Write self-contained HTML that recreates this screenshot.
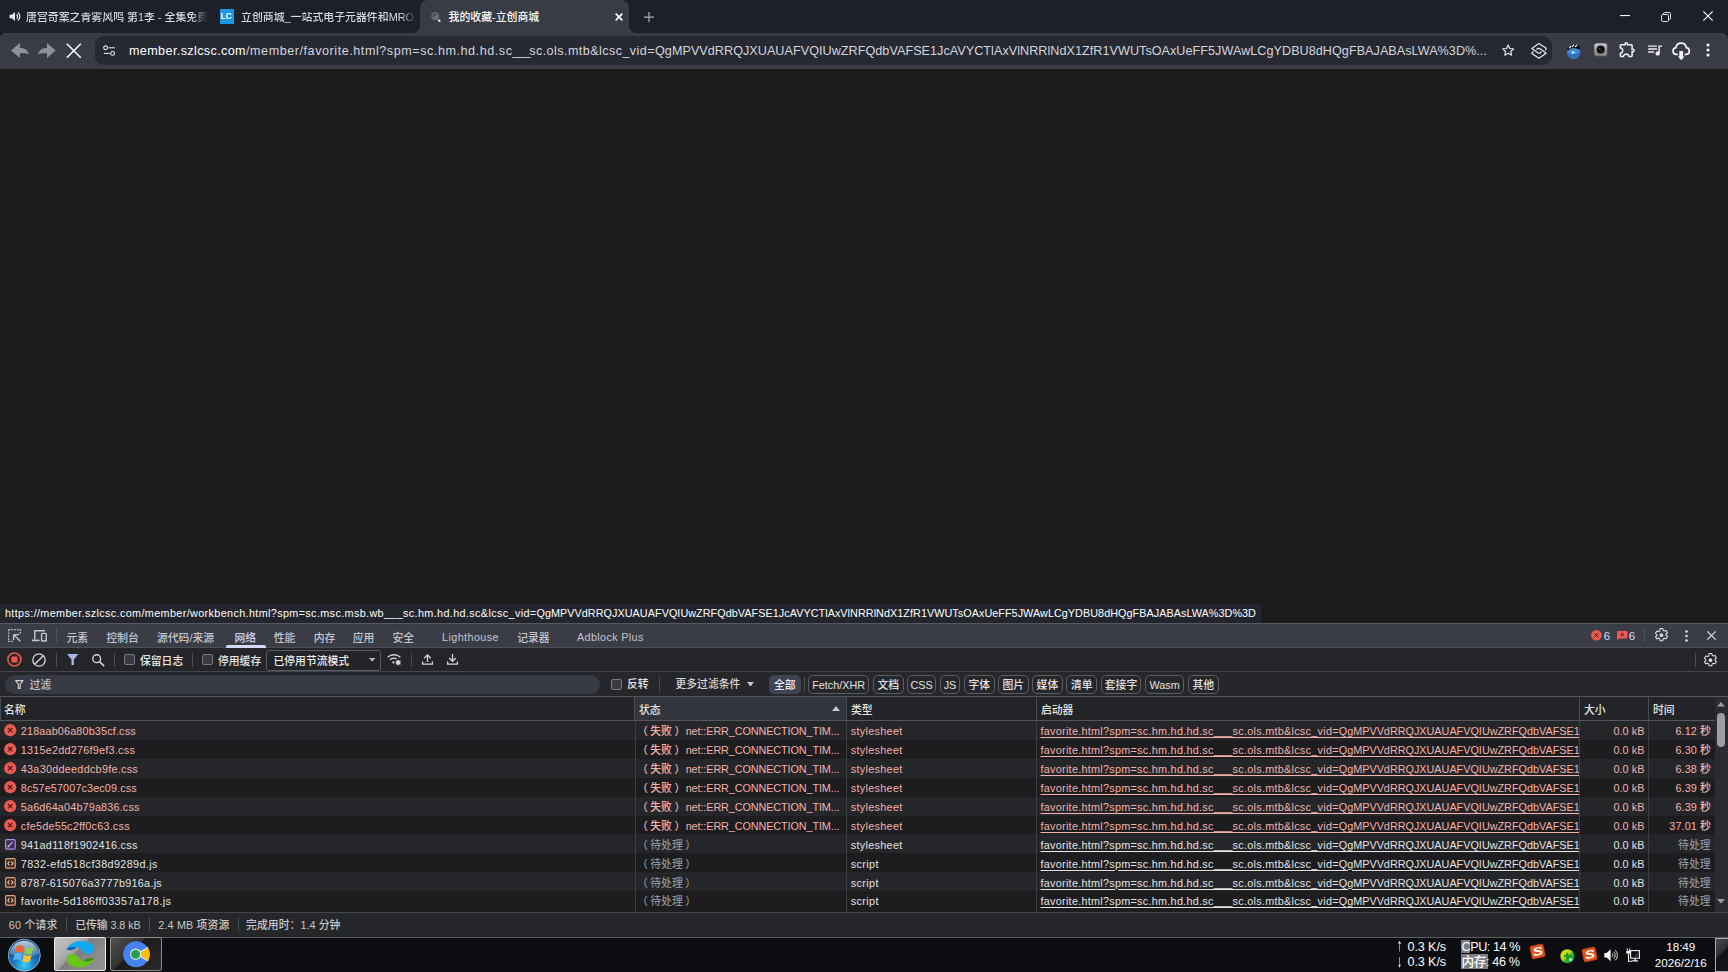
<!DOCTYPE html>
<html lang="zh-CN">
<head>
<meta charset="utf-8">
<title>我的收藏-立创商城</title>
<style>
*{box-sizing:border-box}
html,body{margin:0;padding:0;overflow:hidden;background:#1b1b1b}
body{width:1728px;height:972px;position:relative;overflow:hidden;background:#1b1b1b;font-weight:500;font-family:'Liberation Sans','Noto Sans CJK SC',sans-serif;color:#e3e3e3}
.a{position:absolute}
.t{position:absolute;white-space:nowrap;line-height:1}
svg{position:absolute;overflow:visible}
#tabstrip{left:0;top:0;width:1728px;height:33px;background:#1e2029}
#toolbar{left:0;top:33px;width:1728px;height:36px;background:#393b45;border-radius:5px 6px 0 0}
#omni{left:95px;top:36px;width:1457px;height:29px;background:#262832;border-radius:9px}
#acttab{left:420px;top:0;width:209px;height:34px;background:#393b45;border-radius:8px 8px 0 0}
.tabtxt{font-size:10.9px;top:12.4px;color:#d6d8de;font-weight:500}
#bubble{left:0;top:604px;width:1262px;height:19px;background:#23252d;border-radius:0 3px 0 0}
#dt{left:0;top:623px;width:1728px;height:314px;background:#26272c}
#dttabs{left:0;top:623px;width:1728px;height:25px;background:#3a3c46;border-top:1px solid #565862;border-bottom:1px solid #4c4e58}
.dtt{font-size:10.8px;top:632.5px;color:#c4c6ce}
#dttool{left:0;top:648px;width:1728px;height:24px;background:#242529;border-bottom:1px solid #44464e}
#dtfilter{left:0;top:672px;width:1728px;height:25px;background:#26272b;border-bottom:1px solid #54565c}
.vd{position:absolute;width:1px;background:#4a4c54}
.cb{position:absolute;width:11px;height:11px;border:1px solid #777981;border-radius:2px;background:#3a3b40}
.chip{position:absolute;top:675px;height:19px;border:1px solid #5c5e66;border-radius:5px;font-size:10.8px;color:#e3e3e3;text-align:center;line-height:19.6px;white-space:nowrap}
#thead{left:0;top:697px;width:1715px;height:24px;background:#232427;border-bottom:1px solid #54565c}
.th{position:absolute;top:0;height:23px;font-size:10.8px;line-height:23px;padding-top:1.6px;color:#e3e3e3;white-space:nowrap;padding-left:4px}
.row{position:absolute;left:0;width:1715px;height:19px;font-size:10.8px;line-height:19px;white-space:nowrap}
.row.o{background:#252629}
.row.e{background:#1d1d20}
.c{position:absolute;top:0;height:100%;overflow:hidden;white-space:nowrap;padding-top:1.4px}
.pl{margin-left:-2.6px;margin-right:2.6px}
.pr{margin-left:2.6px;margin-right:-2.6px}
.err{color:#f4b2ac}
.pend{color:#8e9096}
.ok{color:#e3e3e3}
.lnk{text-decoration:underline;text-underline-offset:1.5px;text-decoration-thickness:1px}
#dtstatus{left:0;top:912px;width:1728px;height:25px;background:#25262a;border-top:1px solid #44464e}
.st{font-size:10.8px;top:919.5px;color:#c7c7c7}
#taskbar{left:0;top:937px;width:1728px;height:35px;background:#0b0d11;border-top:1px solid #5a5d63}
.tk{font-size:12.6px;color:#fff}
</style>
</head>
<body>
<div class="a" id="tabstrip"></div>
<div class="a" id="toolbar"></div>
<div class="a" id="acttab"></div>
<svg style="left:413px;top:26px" width="7" height="7" viewBox="0 0 7 7" ><path d="M7 0 V7 H0 A7 7 0 0 0 7 0Z" fill="#393b45"/></svg>
<svg style="left:629px;top:26px" width="7" height="7" viewBox="0 0 7 7" ><path d="M0 0 V7 H7 A7 7 0 0 1 0 0Z" fill="#393b45"/></svg>
<svg style="left:9px;top:10.5px" width="12" height="11" viewBox="0 0 12 11" ><path d="M0.5 3.8h2.3L6 1v9L2.8 7.2H0.5z" fill="#e8e8ec"/><path d="M7.6 3.4a2.8 2.8 0 0 1 0 4.2M8.8 1.4a5.2 5.2 0 0 1 0 8.2" stroke="#e8e8ec" stroke-width="1.3" fill="none"/></svg>
<div class="t tabtxt" style="left:26px;width:183px;overflow:hidden;-webkit-mask-image:linear-gradient(90deg,#000 165px,transparent 182px);mask-image:linear-gradient(90deg,#000 165px,transparent 182px)">唐宫奇案之青雾风鸣 第1季 - 全集免费观看</div>
<div class="a" style="left:219.5px;top:9px;width:14.5px;height:14.5px;background:#1a96e8"></div>
<div class="t" style="left:220.5px;top:12px;font-size:8.5px;font-weight:bold;color:#fff;letter-spacing:-0.3px">LC</div>
<div class="t tabtxt" style="left:241px;width:177px;overflow:hidden;-webkit-mask-image:linear-gradient(90deg,#000 160px,transparent 176px);mask-image:linear-gradient(90deg,#000 160px,transparent 176px)">立创商城_一站式电子元器件和MRO工业品</div>
<svg style="left:430.5px;top:12px" width="10" height="10" viewBox="0 0 10 10" ><circle cx="4.2" cy="4.2" r="3.9" fill="#6b6d78"/><path d="M2.2 4.6a2.1 2.1 0 0 1 3.6-1.6" stroke="#3f414b" stroke-width="1.3" fill="none"/><path d="M1.6 5.2l2.2-.2-1.2-1.6z" fill="#3f414b"/><rect x="7.2" y="7.6" width="2.2" height="2.2" rx="0.5" fill="#fff"/></svg>
<div class="t tabtxt" style="left:448.5px;color:#fff;font-weight:500">我的收藏-立创商城</div>
<svg style="left:614.5px;top:12.5px" width="8" height="8" viewBox="0 0 8 8" ><path d="M0.7 0.7L7.3 7.3M7.3 0.7L0.7 7.3" stroke="#fff" stroke-width="1.7"/></svg>
<svg style="left:643.5px;top:11.5px" width="10" height="10" viewBox="0 0 10 10" ><path d="M5 0V10M0 5H10" stroke="#a9acb7" stroke-width="1.25"/></svg>
<svg style="left:1619.5px;top:14.8px" width="10" height="1.2" viewBox="0 0 10 1.2" ><rect width="10" height="1.1" fill="#fff"/></svg>
<svg style="left:1661px;top:11.5px" width="10" height="10" viewBox="0 0 10 10" ><rect x="0.5" y="2.5" width="7" height="7" rx="1.2" fill="none" stroke="#e6e6ea" stroke-width="1"/><path d="M2.5 2.3V1.6A1.1 1.1 0 0 1 3.6 0.5H8.4A1.1 1.1 0 0 1 9.5 1.6V6.4A1.1 1.1 0 0 1 8.4 7.5H7.7" fill="none" stroke="#e6e6ea" stroke-width="1"/></svg>
<svg style="left:1702.5px;top:11.2px" width="10" height="10" viewBox="0 0 10 10" ><path d="M0.3 0.3L9.7 9.7M9.7 0.3L0.3 9.7" stroke="#fff" stroke-width="1.1"/></svg>
<svg style="left:11px;top:43px" width="19" height="16" viewBox="0 0 19 16" ><path d="M0 7.500L8.900 0V5C13 5 16.500 6.500 18 11.200C16 10.300 14 10.200 8.900 10.200V15.100Z" fill="#8e909a"/></svg>
<svg style="left:38px;top:43px" width="19" height="16" viewBox="0 0 19 16" ><path d="M17.600 7.500L9 0V5C5 5 1.500 6.500 0 11.200C2 10.300 4 10.200 9 10.200V15.100Z" fill="#8e909a"/></svg>
<svg style="left:66.3px;top:43px" width="16" height="16" viewBox="0 0 16 16" ><path d="M0.8 0.8L14.8 14.8M14.8 0.8L0.8 14.8" stroke="#fff" stroke-width="1.5"/></svg>
<div class="a" id="omni"></div>
<svg style="left:102.5px;top:45px" width="13" height="12" viewBox="0 0 13 12" ><circle cx="2.6" cy="2.8" r="1.9" fill="none" stroke="#e8e8ec" stroke-width="1.1"/><path d="M5.6 2.8H11.8" stroke="#e8e8ec" stroke-width="1.1"/><circle cx="9.6" cy="8.4" r="1.9" fill="none" stroke="#e8e8ec" stroke-width="1.1"/><path d="M1 8.4H6.6" stroke="#e8e8ec" stroke-width="1.1"/></svg>
<div class="t" id="url" style="left:129px;top:45.2px;font-size:12.6px;color:#d4d6dc"><span style="letter-spacing:0.378px;color:#fff">member.szlcsc.com</span><span style="letter-spacing:0.547px;">/member/favorite.html?spm=sc.hm.hd.hd.sc</span><span style="letter-spacing:-1.439px;">___</span><span style="letter-spacing:0.428px;">sc.ols.mtb&amp;lcsc_vid=</span><span style="letter-spacing:0.05px;">QgMPVVdRRQJXUAUAFVQIUwZRFQdbVAFSE1JcAVYCTlAxVlNRRlNdX1ZfR1VWUTsOAxUeFF5JWAwLCgYDBU8dHQgFBAJABAsLWA%3D%...</span></div>
<svg style="left:1502.2px;top:44.2px" width="12.4" height="12" viewBox="0 0 12.4 12" ><path d="M6.2 1L7.8 4.5L11.6 4.9L8.8 7.5L9.55 11.2L6.2 9.3L2.85 11.2L3.6 7.5L0.8 4.9L4.600 4.500Z" fill="none" stroke="#e8e8ec" stroke-width="1.2" stroke-linejoin="round"/></svg>
<svg style="left:1531px;top:42.5px" width="16" height="16" viewBox="0 0 16 16" ><path d="M14.6 6.9L15.2 5.3L7.97 0.55L0.84 5.5L6.9 9.7Q8.8 10.9 10.2 8.900" fill="none" stroke="#e8e8ec" stroke-width="1.25" stroke-linejoin="round" stroke-linecap="round"/><path d="M5.800 6.150Q7.500 4.800 9.500 6.100L15.100 10.250L7.970 15.220L0.840 10.470L2.200 8.700" fill="none" stroke="#e8e8ec" stroke-width="1.250" stroke-linejoin="round" stroke-linecap="round"/></svg>
<svg style="left:1565.5px;top:43px" width="15.5" height="16" viewBox="0 0 15.5 16" ><circle cx="7.700" cy="9.300" r="6.500" fill="#3f8ad8"/><path d="M1.200 9.300A6.500 6.500 0 0 0 14.200 9.300A9 7 0 0 1 1.200 9.300z" fill="#2d72c2"/><path d="M1.700 5.200Q7 0 13.600 4.400L12.900 5.900Q7 2.300 2.400 6.600z" fill="#101216" stroke="#101216" stroke-width="1.400" stroke-linejoin="round"/><path d="M3.200 5.300L4.900 2.900M6.200 4L7.900 1.700M9.200 4L10.900 1.800" stroke="#fff" stroke-width="1.200"/><path d="M5.800 7.600L9.600 9.400L5.800 11.200z" fill="#b8ecff"/></svg>
<svg style="left:1593.6px;top:43.3px" width="13.4" height="13.4" viewBox="0 0 13.4 13.4" ><defs><linearGradient id="cg" x1="0" y1="0" x2="0" y2="1"><stop offset="0" stop-color="#c9c9c9"/><stop offset="0.5" stop-color="#9c9c9c"/><stop offset="1" stop-color="#7a7a7a"/></linearGradient></defs><rect x="0.200" y="0.200" width="13" height="13" rx="2.600" fill="url(#cg)"/><circle cx="6.700" cy="6.600" r="4" fill="#0c0c0c"/><circle cx="5.700" cy="5.600" r="0.800" fill="#6a6a6a"/><circle cx="7.600" cy="7.700" r="0.700" fill="#555"/></svg>
<svg style="left:1618.3px;top:40.1px" width="18.8" height="18.8" viewBox="0 0 24 24" ><path d="M10.500 4.500c.280 0 .500.220.500.500v2h6v6h2c.280 0 .500.220.500.500s-.220.500-.500.500h-2v6h-2.120c-.680-1.750-2.390-3-4.380-3s-3.700 1.250-4.380 3H4v-2.120c1.750-.680 3-2.390 3-4.380 0-1.990-1.240-3.700-2.990-4.380L4 7h6V5c0-.280.220-.500.500-.500m0-2C9.120 2.500 8 3.620 8 5H4c-1.100 0-1.990.900-1.990 2v3.800h.290c1.490 0 2.700 1.210 2.700 2.700s-1.210 2.700-2.700 2.700H2V20c0 1.100.900 2 2 2h3.800v-.300c0-1.490 1.210-2.700 2.700-2.700s2.700 1.210 2.700 2.700v.300H17c1.100 0 2-.900 2-2v-4c1.380 0 2.500-1.120 2.500-2.500S20.380 11 19 11V7c0-1.100-.900-2-2-2h-4c0-1.380-1.120-2.500-2.500-2.500z" fill="#eeeef2"/></svg>
<svg style="left:1645.5px;top:40.6px" width="17.5" height="17.5" viewBox="0 0 24 24" ><path d="M15 6H3v2h12V6zm0 4H3v2h12v-2zM3 16h8v-2H3v2zM17 6v8.180c-.310-.110-.650-.180-1-.180-1.660 0-3 1.340-3 3s1.340 3 3 3 3-1.340 3-3V8h3V6h-5z" fill="#eeeef2"/></svg>
<svg style="left:1672px;top:40.5px" width="18.5" height="19.5" viewBox="0 0 18.5 19.5" ><path d="M5.300 13.400H4.300A3.400 3.400 0 0 1 3.900 6.650A5.300 5.300 0 0 1 14.400 6.650A3.400 3.400 0 0 1 14.200 13.400H13.200" fill="none" stroke="#f4f4f6" stroke-width="1.700" stroke-linecap="round"/><path d="M7.300 9.900H11.100V15.400H12.500L9.200 19.200L5.900 15.400H7.300z" fill="#f4f4f6"/></svg>
<svg style="left:1706.1px;top:43.4px" width="4" height="14" viewBox="0 0 4 14" ><circle cx="2" cy="2" r="1.550" fill="#f4f4f6"/><circle cx="2" cy="7" r="1.550" fill="#f4f4f6"/><circle cx="2" cy="12" r="1.550" fill="#f4f4f6"/></svg>
<div class="a" id="bubble"></div>
<div class="t" id="sturl" style="left:5px;top:607.7px;font-size:10.8px;color:#fff"><span style="letter-spacing:0.37px;">https://member.szlcsc.com/member/workbench.html?spm=sc.msc.msb.wb___sc.hm.hd.hd.sc&amp;lcsc_vid=</span><span style="letter-spacing:0.057px;">QgMPVVdRRQJXUAUAFVQIUwZRFQdbVAFSE1JcAVYCTlAxVlNRRlNdX1ZfR1VWUTsOAxUeFF5JWAwLCgYDBU8dHQgFBAJABAsLWA%3D%3D</span></div>
<div class="a" id="dt"></div>
<div class="a" id="dttabs"></div>
<svg style="left:8px;top:629px" width="13" height="13" viewBox="0 0 13 13" ><path d="M0.7 0.7H12.3V5.2M0.7 0.7V12.3H5.2" fill="none" stroke="#c4c6ce" stroke-width="1.3" stroke-dasharray="1.6 1.2"/><path d="M5.6 5.6H11M5.6 5.6V11M5.8 5.8L12.3 12.3" stroke="#c4c6ce" stroke-width="1.4" fill="none"/></svg>
<svg style="left:32px;top:629.5px" width="15" height="12" viewBox="0 0 15 12" ><path d="M2.8 9.6V0.8H13" fill="none" stroke="#c4c6ce" stroke-width="1.4"/><path d="M0 10.4H7.6" stroke="#c4c6ce" stroke-width="1.6"/><rect x="9.6" y="3.4" width="4.6" height="7.6" rx="0.6" fill="none" stroke="#c4c6ce" stroke-width="1.4"/></svg>
<div class="vd" style="left:56px;top:628px;height:15px;background:#50525c"></div>
<div class="t dtt" style="left:66.5px;color:#c4c6ce">元素</div>
<div class="t dtt" style="left:106.5px;color:#c4c6ce">控制台</div>
<div class="t dtt" style="left:157.0px;color:#c4c6ce">源代码/来源</div>
<div class="t dtt" style="left:234.5px;color:#c9d2f5">网络</div>
<div class="t dtt" style="left:273.8px;color:#c4c6ce">性能</div>
<div class="t dtt" style="left:313.7px;color:#c4c6ce">内存</div>
<div class="t dtt" style="left:352.8px;color:#c4c6ce">应用</div>
<div class="t dtt" style="left:392.5px;color:#c4c6ce">安全</div>
<div class="t" style="left:442px;top:632px;font-size:10.8px;letter-spacing:0.416px;color:#c4c6ce;">Lighthouse</div>
<div class="t dtt" style="left:517.2px;color:#c4c6ce">记录器</div>
<div class="t" style="left:577px;top:632px;font-size:10.8px;letter-spacing:0.361px;color:#c4c6ce;">Adblock Plus</div>
<div class="a" style="left:226px;top:645px;width:40px;height:3px;background:#d3dbfb;border-radius:2px 2px 0 0"></div>
<svg style="left:1591px;top:630px" width="11" height="11" viewBox="0 0 11 11" ><circle cx="5.4" cy="5.3" r="5.3" fill="#ea5a50"/><path d="M3.4 3.3L7.4 7.3M7.4 3.3L3.4 7.3" stroke="#3a1512" stroke-width="1"/></svg>
<div class="t" style="left:1603.8px;top:630.8px;font-size:11.5px;color:#d8dcf0">6</div>
<svg style="left:1617px;top:631px" width="11" height="10" viewBox="0 0 11 10" ><path d="M0.8 0H9.6A0.8 0.8 0 0 1 10.4 0.8V6.6A0.8 0.8 0 0 1 9.6 7.4H2.6L0 9.4V0.8A0.8 0.8 0 0 1 0.8 0z" fill="#ea5a50"/><path d="M3.8 2.2L6.6 5M6.6 2.2L3.8 5" stroke="#3a1512" stroke-width="1"/></svg>
<div class="t" style="left:1628.8px;top:630.8px;font-size:11.5px;color:#d8dcf0">6</div>
<div class="vd" style="left:1644px;top:628px;height:14px;background:#50525c"></div>
<svg style="left:1654.6px;top:628.2px" width="14" height="15.6" viewBox="0 0 14 15.6" ><g transform="scale(0.92)"><path d="M5.5 0.6h3l.4 2 1.2.7 1.9-.7 1.5 2.6-1.5 1.3v1.4l1.5 1.3-1.5 2.6-1.9-.7-1.2.7-.4 2h-3l-.4-2-1.2-.7-1.9.7L.5 9.800 2 8.500V7.100L.5 5.800 2 3.200l1.900.7 1.200-.7z" fill="none" stroke="#e3e3e6" stroke-width="1.15" stroke-linejoin="round"/><circle cx="7" cy="7.8" r="2" fill="#d8d8dc"/></g></svg>
<svg style="left:1685px;top:629.5px" width="3" height="12" viewBox="0 0 3 12" ><circle cx="1.5" cy="1.4" r="1.25" fill="#e3e3e6"/><circle cx="1.5" cy="6" r="1.25" fill="#e3e3e6"/><circle cx="1.5" cy="10.6" r="1.25" fill="#e3e3e6"/></svg>
<svg style="left:1706.5px;top:631.2px" width="9" height="9" viewBox="0 0 9 9" ><path d="M0.3 0.3L8.7 8.7M8.7 0.3L0.3 8.7" stroke="#e3e3e6" stroke-width="1.2"/></svg>
<div class="a" id="dttool"></div>
<svg style="left:6.7px;top:651.7px" width="15" height="15" viewBox="0 0 15 15" ><circle cx="7.4" cy="7.5" r="6.5" fill="none" stroke="#ea5a50" stroke-width="1.6"/><rect x="4.4" y="4.5" width="6" height="6" rx="0.8" fill="#f0574c"/></svg>
<svg style="left:32.3px;top:652.5px" width="14" height="14" viewBox="0 0 14 14" ><circle cx="7" cy="7" r="6.2" fill="none" stroke="#d8d8dc" stroke-width="1.3"/><path d="M2.7 11.3L11.3 2.7" stroke="#d8d8dc" stroke-width="1.3"/></svg>
<div class="vd" style="left:56px;top:653px;height:14px"></div>
<svg style="left:67px;top:654px" width="11.5" height="11" viewBox="0 0 11.5 11" ><path d="M0 0H11.4L6.9 5.6V11H4.5V5.6z" fill="#a9b4e4"/></svg>
<svg style="left:91.5px;top:653.5px" width="13" height="13" viewBox="0 0 13 13" ><circle cx="4.7" cy="4.7" r="3.9" fill="none" stroke="#d8d8dc" stroke-width="1.4"/><path d="M7.6 7.6L12.2 12.2" stroke="#d8d8dc" stroke-width="1.6"/></svg>
<div class="vd" style="left:114px;top:653px;height:14px"></div>
<div class="cb" style="left:124px;top:654px"></div>
<div class="t" style="left:140px;top:655.5px;font-size:10.8px;color:#e8e8e8">保留日志</div>
<div class="vd" style="left:192px;top:653px;height:14px"></div>
<div class="cb" style="left:201.5px;top:654px"></div>
<div class="t" style="left:218px;top:655.5px;font-size:10.8px;color:#e8e8e8">停用缓存</div>
<div class="a" style="left:266px;top:649.5px;width:115px;height:21px;border:1px solid #5a5c64;border-radius:3px;background:#232428"></div>
<div class="t" style="left:273.5px;top:655.5px;font-size:10.8px;color:#f0f0f0">已停用节流模式</div>
<svg style="left:368.5px;top:657.7px" width="6.4" height="3.8" viewBox="0 0 6.4 3.8" ><path d="M0 0H6.4L3.2 3.8z" fill="#b8bac0"/></svg>
<svg style="left:387px;top:654px" width="15" height="11.5" viewBox="0 0 15 11.5" ><path d="M0.6 3.4A9 9 0 0 1 13.4 3.4M2.9 5.8A5.8 5.8 0 0 1 9.6 4.9" fill="none" stroke="#d8d8dc" stroke-width="1.3"/><circle cx="6.4" cy="8.4" r="1.1" fill="#d8d8dc"/><circle cx="11.2" cy="8.6" r="1.5" fill="none" stroke="#d8d8dc" stroke-width="1.6"/><path d="M11.2 5.8V11.4M8.8 7.2L13.6 10M13.6 7.2L8.8 10" stroke="#d8d8dc" stroke-width="1"/></svg>
<div class="vd" style="left:410.5px;top:653px;height:14px"></div>
<svg style="left:422px;top:654px" width="11" height="11" viewBox="0 0 11 11" ><path d="M5.5 8V1M2.2 4.2L5.5 0.9L8.8 4.2" fill="none" stroke="#d8d8dc" stroke-width="1.3"/><path d="M0.6 7.6V10.2H10.4V7.6" fill="none" stroke="#d8d8dc" stroke-width="1.3"/></svg>
<svg style="left:447px;top:654px" width="11" height="11" viewBox="0 0 11 11" ><path d="M5.5 0V7.2M2.2 4L5.5 7.3L8.8 4" fill="none" stroke="#d8d8dc" stroke-width="1.3"/><path d="M0.6 7.6V10.2H10.4V7.6" fill="none" stroke="#d8d8dc" stroke-width="1.3"/></svg>
<div class="vd" style="left:1695px;top:653px;height:14px"></div>
<svg style="left:1704.1px;top:652.8px" width="14" height="15.6" viewBox="0 0 14 15.6" ><g transform="scale(0.92)"><path d="M5.5 0.6h3l.4 2 1.2.7 1.9-.7 1.5 2.6-1.5 1.3v1.4l1.5 1.3-1.5 2.6-1.9-.7-1.2.7-.4 2h-3l-.4-2-1.2-.7-1.9.7L.5 9.800 2 8.500V7.100L.5 5.800 2 3.200l1.900.7 1.200-.7z" fill="none" stroke="#e3e3e6" stroke-width="1.15" stroke-linejoin="round"/><circle cx="7" cy="7.8" r="2" fill="#d8d8dc"/></g></svg>
<div class="a" id="dtfilter"></div>
<div class="a" style="left:4.5px;top:675px;width:595px;height:18.5px;border-radius:9.5px;background:#383a43"></div>
<svg style="left:14.5px;top:679.8px" width="9" height="9" viewBox="0 0 9 9" ><path d="M0.6 0.6H8L5.2 4.2V8.4H3.4V4.2z" fill="none" stroke="#d0d2d8" stroke-width="1.1" stroke-linejoin="round"/></svg>
<div class="t" style="left:29.5px;top:680.2px;font-size:10.8px;color:#c4c6cc">过滤</div>
<div class="cb" style="left:611px;top:678.5px"></div>
<div class="t" style="left:627px;top:679.3px;font-size:10.8px;color:#e3e3e3">反转</div>
<div class="vd" style="left:659px;top:677px;height:15px"></div>
<div class="t" style="left:675.5px;top:679.3px;font-size:10.8px;color:#d6d6da">更多过滤条件</div>
<svg style="left:747.3px;top:681.6px" width="7" height="4.6" viewBox="0 0 7 4.6" ><path d="M0 0H7L3.5 4.6z" fill="#c8c8cc"/></svg>
<div class="chip" style="left:769px;width:31.5px;background:#3f4452;border-color:#3f4452;color:#e8ecff">全部</div>
<div class="vd" style="left:804px;top:677px;height:15px"></div>
<div class="chip" style="left:808px;width:61.3px">Fetch/XHR</div>
<div class="chip" style="left:872.8px;width:30.8px">文档</div>
<div class="chip" style="left:907px;width:29px">CSS</div>
<div class="chip" style="left:940px;width:20px">JS</div>
<div class="chip" style="left:964px;width:30.5px">字体</div>
<div class="chip" style="left:998px;width:30.6px">图片</div>
<div class="chip" style="left:1032px;width:30.8px">媒体</div>
<div class="chip" style="left:1066.4px;width:30.6px">清单</div>
<div class="chip" style="left:1101px;width:40px">套接字</div>
<div class="chip" style="left:1145px;width:39.3px">Wasm</div>
<div class="chip" style="left:1188px;width:30.6px">其他</div>
<div class="a" id="thead">
<div class="th" style="left:0px;width:634px;">名称</div>
<div class="th" style="left:634px;width:212px;background:#33353c;border-left:1px solid #4a4c54;">状态</div>
<div class="th" style="left:846px;width:190px;border-left:1px solid #4a4c54;">类型</div>
<div class="th" style="left:1036px;width:543px;border-left:1px solid #4a4c54;">启动器</div>
<div class="th" style="left:1579px;width:69px;border-left:1px solid #4a4c54;">大小</div>
<div class="th" style="left:1648px;width:67px;border-left:1px solid #4a4c54;">时间</div>
<svg style="left:831.5px;top:8.5px" width="8" height="5" viewBox="0 0 8 5" ><path d="M0 5H8L4 0z" fill="#c8c8cc"/></svg>
</div>
<div class="a" style="left:0;top:696px;width:1px;height:216px;background:#4a4c54"></div>
<div class="row o err" style="top:721.0px;height:19px">
<svg style="left:4.4px;top:3.4px" width="12.4" height="12.4" viewBox="0 0 12.4 12.4" ><circle cx="6.2" cy="6.2" r="6.1" fill="#ea5a50"/><path d="M4 4L8.4 8.4M8.4 4L4 8.4" stroke="#4a1a16" stroke-width="1.1"/></svg>
<div class="c" style="left:20.8px;width:612px"><span style="letter-spacing:0.166px;">218aab06a80b35cf.css</span></div>
<div class="c" style="left:635px;width:210px;border-left:1px solid #3c3e46;padding-left:3.5px"><span class="pl">（</span>失败<span class="pr">）</span> <span style="letter-spacing:-0.084px;">net::ERR_CONNECTION_TIM...</span></div>
<div class="c" style="left:846px;width:190px;border-left:1px solid #3c3e46;padding-left:3.8px"><span style="letter-spacing:0.312px;">stylesheet</span></div>
<div class="c" style="left:1036px;width:543.5px;border-left:1px solid #3c3e46;padding-left:3.5px"><span class="lnk"><span style="letter-spacing:0.284px;">favorite.html?spm=sc.hm.hd.hd.sc___sc.ols.mtb&amp;lcsc_vid=</span><span style="letter-spacing:0.016px;">QgMPVVdRRQJXUAUAFVQIUwZRFQdbVAFSE1JcAVYCTlAxVlNRRlNdX1ZfR1VWUTsOAxUeFF5JWAwLCgYDBU8dHQgFBAJABAsLWA%3D%3D</span></span></div>
<div class="c" style="left:1579px;width:69px;border-left:1px solid #3c3e46;text-align:right;padding-right:3.6px"><span style="letter-spacing:0.065px;">0.0 kB</span></div>
<div class="c" style="left:1648px;width:67px;border-left:1px solid #3c3e46;text-align:right;padding-right:4px"><span style="letter-spacing:0.131px;">6.12 秒</span></div>
</div>
<div class="row e err" style="top:739.9px;height:19px">
<svg style="left:4.4px;top:3.4px" width="12.4" height="12.4" viewBox="0 0 12.4 12.4" ><circle cx="6.2" cy="6.2" r="6.1" fill="#ea5a50"/><path d="M4 4L8.4 8.4M8.4 4L4 8.4" stroke="#4a1a16" stroke-width="1.1"/></svg>
<div class="c" style="left:20.8px;width:612px"><span style="letter-spacing:0.249px;">1315e2dd276f9ef3.css</span></div>
<div class="c" style="left:635px;width:210px;border-left:1px solid #3c3e46;padding-left:3.5px"><span class="pl">（</span>失败<span class="pr">）</span> <span style="letter-spacing:-0.084px;">net::ERR_CONNECTION_TIM...</span></div>
<div class="c" style="left:846px;width:190px;border-left:1px solid #3c3e46;padding-left:3.8px"><span style="letter-spacing:0.312px;">stylesheet</span></div>
<div class="c" style="left:1036px;width:543.5px;border-left:1px solid #3c3e46;padding-left:3.5px"><span class="lnk"><span style="letter-spacing:0.284px;">favorite.html?spm=sc.hm.hd.hd.sc___sc.ols.mtb&amp;lcsc_vid=</span><span style="letter-spacing:0.016px;">QgMPVVdRRQJXUAUAFVQIUwZRFQdbVAFSE1JcAVYCTlAxVlNRRlNdX1ZfR1VWUTsOAxUeFF5JWAwLCgYDBU8dHQgFBAJABAsLWA%3D%3D</span></span></div>
<div class="c" style="left:1579px;width:69px;border-left:1px solid #3c3e46;text-align:right;padding-right:3.6px"><span style="letter-spacing:0.065px;">0.0 kB</span></div>
<div class="c" style="left:1648px;width:67px;border-left:1px solid #3c3e46;text-align:right;padding-right:4px"><span style="letter-spacing:0.131px;">6.30 秒</span></div>
</div>
<div class="row o err" style="top:758.8px;height:19px">
<svg style="left:4.4px;top:3.4px" width="12.4" height="12.4" viewBox="0 0 12.4 12.4" ><circle cx="6.2" cy="6.2" r="6.1" fill="#ea5a50"/><path d="M4 4L8.4 8.4M8.4 4L4 8.4" stroke="#4a1a16" stroke-width="1.1"/></svg>
<div class="c" style="left:20.8px;width:612px"><span style="letter-spacing:0.279px;">43a30ddeeddcb9fe.css</span></div>
<div class="c" style="left:635px;width:210px;border-left:1px solid #3c3e46;padding-left:3.5px"><span class="pl">（</span>失败<span class="pr">）</span> <span style="letter-spacing:-0.084px;">net::ERR_CONNECTION_TIM...</span></div>
<div class="c" style="left:846px;width:190px;border-left:1px solid #3c3e46;padding-left:3.8px"><span style="letter-spacing:0.312px;">stylesheet</span></div>
<div class="c" style="left:1036px;width:543.5px;border-left:1px solid #3c3e46;padding-left:3.5px"><span class="lnk"><span style="letter-spacing:0.284px;">favorite.html?spm=sc.hm.hd.hd.sc___sc.ols.mtb&amp;lcsc_vid=</span><span style="letter-spacing:0.016px;">QgMPVVdRRQJXUAUAFVQIUwZRFQdbVAFSE1JcAVYCTlAxVlNRRlNdX1ZfR1VWUTsOAxUeFF5JWAwLCgYDBU8dHQgFBAJABAsLWA%3D%3D</span></span></div>
<div class="c" style="left:1579px;width:69px;border-left:1px solid #3c3e46;text-align:right;padding-right:3.6px"><span style="letter-spacing:0.065px;">0.0 kB</span></div>
<div class="c" style="left:1648px;width:67px;border-left:1px solid #3c3e46;text-align:right;padding-right:4px"><span style="letter-spacing:0.131px;">6.38 秒</span></div>
</div>
<div class="row e err" style="top:777.7px;height:19px">
<svg style="left:4.4px;top:3.4px" width="12.4" height="12.4" viewBox="0 0 12.4 12.4" ><circle cx="6.2" cy="6.2" r="6.1" fill="#ea5a50"/><path d="M4 4L8.4 8.4M8.4 4L4 8.4" stroke="#4a1a16" stroke-width="1.1"/></svg>
<div class="c" style="left:20.8px;width:612px"><span style="letter-spacing:0.127px;">8c57e57007c3ec09.css</span></div>
<div class="c" style="left:635px;width:210px;border-left:1px solid #3c3e46;padding-left:3.5px"><span class="pl">（</span>失败<span class="pr">）</span> <span style="letter-spacing:-0.084px;">net::ERR_CONNECTION_TIM...</span></div>
<div class="c" style="left:846px;width:190px;border-left:1px solid #3c3e46;padding-left:3.8px"><span style="letter-spacing:0.312px;">stylesheet</span></div>
<div class="c" style="left:1036px;width:543.5px;border-left:1px solid #3c3e46;padding-left:3.5px"><span class="lnk"><span style="letter-spacing:0.284px;">favorite.html?spm=sc.hm.hd.hd.sc___sc.ols.mtb&amp;lcsc_vid=</span><span style="letter-spacing:0.016px;">QgMPVVdRRQJXUAUAFVQIUwZRFQdbVAFSE1JcAVYCTlAxVlNRRlNdX1ZfR1VWUTsOAxUeFF5JWAwLCgYDBU8dHQgFBAJABAsLWA%3D%3D</span></span></div>
<div class="c" style="left:1579px;width:69px;border-left:1px solid #3c3e46;text-align:right;padding-right:3.6px"><span style="letter-spacing:0.065px;">0.0 kB</span></div>
<div class="c" style="left:1648px;width:67px;border-left:1px solid #3c3e46;text-align:right;padding-right:4px"><span style="letter-spacing:0.131px;">6.39 秒</span></div>
</div>
<div class="row o err" style="top:796.6px;height:19px">
<svg style="left:4.4px;top:3.4px" width="12.4" height="12.4" viewBox="0 0 12.4 12.4" ><circle cx="6.2" cy="6.2" r="6.1" fill="#ea5a50"/><path d="M4 4L8.4 8.4M8.4 4L4 8.4" stroke="#4a1a16" stroke-width="1.1"/></svg>
<div class="c" style="left:20.8px;width:612px"><span style="letter-spacing:0.173px;">5a6d64a04b79a836.css</span></div>
<div class="c" style="left:635px;width:210px;border-left:1px solid #3c3e46;padding-left:3.5px"><span class="pl">（</span>失败<span class="pr">）</span> <span style="letter-spacing:-0.084px;">net::ERR_CONNECTION_TIM...</span></div>
<div class="c" style="left:846px;width:190px;border-left:1px solid #3c3e46;padding-left:3.8px"><span style="letter-spacing:0.312px;">stylesheet</span></div>
<div class="c" style="left:1036px;width:543.5px;border-left:1px solid #3c3e46;padding-left:3.5px"><span class="lnk"><span style="letter-spacing:0.284px;">favorite.html?spm=sc.hm.hd.hd.sc___sc.ols.mtb&amp;lcsc_vid=</span><span style="letter-spacing:0.016px;">QgMPVVdRRQJXUAUAFVQIUwZRFQdbVAFSE1JcAVYCTlAxVlNRRlNdX1ZfR1VWUTsOAxUeFF5JWAwLCgYDBU8dHQgFBAJABAsLWA%3D%3D</span></span></div>
<div class="c" style="left:1579px;width:69px;border-left:1px solid #3c3e46;text-align:right;padding-right:3.6px"><span style="letter-spacing:0.065px;">0.0 kB</span></div>
<div class="c" style="left:1648px;width:67px;border-left:1px solid #3c3e46;text-align:right;padding-right:4px"><span style="letter-spacing:0.131px;">6.39 秒</span></div>
</div>
<div class="row e err" style="top:815.5px;height:19px">
<svg style="left:4.4px;top:3.4px" width="12.4" height="12.4" viewBox="0 0 12.4 12.4" ><circle cx="6.2" cy="6.2" r="6.1" fill="#ea5a50"/><path d="M4 4L8.4 8.4M8.4 4L4 8.4" stroke="#4a1a16" stroke-width="1.1"/></svg>
<div class="c" style="left:20.8px;width:612px"><span style="letter-spacing:0.237px;">cfe5de55c2ff0c63.css</span></div>
<div class="c" style="left:635px;width:210px;border-left:1px solid #3c3e46;padding-left:3.5px"><span class="pl">（</span>失败<span class="pr">）</span> <span style="letter-spacing:-0.084px;">net::ERR_CONNECTION_TIM...</span></div>
<div class="c" style="left:846px;width:190px;border-left:1px solid #3c3e46;padding-left:3.8px"><span style="letter-spacing:0.312px;">stylesheet</span></div>
<div class="c" style="left:1036px;width:543.5px;border-left:1px solid #3c3e46;padding-left:3.5px"><span class="lnk"><span style="letter-spacing:0.284px;">favorite.html?spm=sc.hm.hd.hd.sc___sc.ols.mtb&amp;lcsc_vid=</span><span style="letter-spacing:0.016px;">QgMPVVdRRQJXUAUAFVQIUwZRFQdbVAFSE1JcAVYCTlAxVlNRRlNdX1ZfR1VWUTsOAxUeFF5JWAwLCgYDBU8dHQgFBAJABAsLWA%3D%3D</span></span></div>
<div class="c" style="left:1579px;width:69px;border-left:1px solid #3c3e46;text-align:right;padding-right:3.6px"><span style="letter-spacing:0.065px;">0.0 kB</span></div>
<div class="c" style="left:1648px;width:67px;border-left:1px solid #3c3e46;text-align:right;padding-right:4px"><span style="letter-spacing:0.132px;">37.01 秒</span></div>
</div>
<div class="row o ok" style="top:834.4px;height:19px">
<svg style="left:5.3px;top:4.4px" width="10.8" height="10.8" viewBox="0 0 10.8 10.8" ><rect x="0.6" y="0.6" width="9.6" height="9.6" rx="1.3" fill="#3b2c52" stroke="#b48de0" stroke-width="1.2"/><path d="M3.2 7.6L7.6 3.2" stroke="#d8c4f4" stroke-width="1.1"/><circle cx="3.3" cy="7.5" r="0.9" fill="#d8c4f4"/></svg>
<div class="c" style="left:20.8px;width:612px"><span style="letter-spacing:0.264px;">941ad118f1902416.css</span></div>
<div class="c pend" style="left:635px;width:210px;border-left:1px solid #3c3e46;padding-left:3.5px"><span class="pl">（</span>待处理<span class="pr">）</span></div>
<div class="c" style="left:846px;width:190px;border-left:1px solid #3c3e46;padding-left:3.8px"><span style="letter-spacing:0.312px;">stylesheet</span></div>
<div class="c" style="left:1036px;width:543.5px;border-left:1px solid #3c3e46;padding-left:3.5px"><span class="lnk"><span style="letter-spacing:0.284px;">favorite.html?spm=sc.hm.hd.hd.sc___sc.ols.mtb&amp;lcsc_vid=</span><span style="letter-spacing:0.016px;">QgMPVVdRRQJXUAUAFVQIUwZRFQdbVAFSE1JcAVYCTlAxVlNRRlNdX1ZfR1VWUTsOAxUeFF5JWAwLCgYDBU8dHQgFBAJABAsLWA%3D%3D</span></span></div>
<div class="c" style="left:1579px;width:69px;border-left:1px solid #3c3e46;text-align:right;padding-right:3.6px"><span style="letter-spacing:0.065px;">0.0 kB</span></div>
<div class="c pend" style="left:1648px;width:67px;border-left:1px solid #3c3e46;text-align:right;padding-right:4.5px">待处理</div>
</div>
<div class="row e ok" style="top:853.3px;height:19px">
<svg style="left:5.3px;top:4.4px" width="10.8" height="10.8" viewBox="0 0 10.8 10.8" ><rect x="0.6" y="0.6" width="9.6" height="9.6" rx="1.3" fill="#3a2a20" stroke="#e2a27e" stroke-width="1.2"/><path d="M4.4 3.4L2.8 5.4L4.4 7.4M6.4 3.4L8 5.4L6.4 7.4" stroke="#f0c4a8" stroke-width="1.1" fill="none"/></svg>
<div class="c" style="left:20.8px;width:612px"><span style="letter-spacing:0.38px;">7832-efd518cf38d9289d.js</span></div>
<div class="c pend" style="left:635px;width:210px;border-left:1px solid #3c3e46;padding-left:3.5px"><span class="pl">（</span>待处理<span class="pr">）</span></div>
<div class="c" style="left:846px;width:190px;border-left:1px solid #3c3e46;padding-left:3.8px"><span style="letter-spacing:0.367px;">script</span></div>
<div class="c" style="left:1036px;width:543.5px;border-left:1px solid #3c3e46;padding-left:3.5px"><span class="lnk"><span style="letter-spacing:0.284px;">favorite.html?spm=sc.hm.hd.hd.sc___sc.ols.mtb&amp;lcsc_vid=</span><span style="letter-spacing:0.016px;">QgMPVVdRRQJXUAUAFVQIUwZRFQdbVAFSE1JcAVYCTlAxVlNRRlNdX1ZfR1VWUTsOAxUeFF5JWAwLCgYDBU8dHQgFBAJABAsLWA%3D%3D</span></span></div>
<div class="c" style="left:1579px;width:69px;border-left:1px solid #3c3e46;text-align:right;padding-right:3.6px"><span style="letter-spacing:0.065px;">0.0 kB</span></div>
<div class="c pend" style="left:1648px;width:67px;border-left:1px solid #3c3e46;text-align:right;padding-right:4.5px">待处理</div>
</div>
<div class="row o ok" style="top:872.2px;height:19px">
<svg style="left:5.3px;top:4.4px" width="10.8" height="10.8" viewBox="0 0 10.8 10.8" ><rect x="0.6" y="0.6" width="9.6" height="9.6" rx="1.3" fill="#3a2a20" stroke="#e2a27e" stroke-width="1.2"/><path d="M4.4 3.4L2.8 5.4L4.4 7.4M6.4 3.4L8 5.4L6.4 7.4" stroke="#f0c4a8" stroke-width="1.1" fill="none"/></svg>
<div class="c" style="left:20.8px;width:612px"><span style="letter-spacing:0.281px;">8787-615076a3777b916a.js</span></div>
<div class="c pend" style="left:635px;width:210px;border-left:1px solid #3c3e46;padding-left:3.5px"><span class="pl">（</span>待处理<span class="pr">）</span></div>
<div class="c" style="left:846px;width:190px;border-left:1px solid #3c3e46;padding-left:3.8px"><span style="letter-spacing:0.367px;">script</span></div>
<div class="c" style="left:1036px;width:543.5px;border-left:1px solid #3c3e46;padding-left:3.5px"><span class="lnk"><span style="letter-spacing:0.284px;">favorite.html?spm=sc.hm.hd.hd.sc___sc.ols.mtb&amp;lcsc_vid=</span><span style="letter-spacing:0.016px;">QgMPVVdRRQJXUAUAFVQIUwZRFQdbVAFSE1JcAVYCTlAxVlNRRlNdX1ZfR1VWUTsOAxUeFF5JWAwLCgYDBU8dHQgFBAJABAsLWA%3D%3D</span></span></div>
<div class="c" style="left:1579px;width:69px;border-left:1px solid #3c3e46;text-align:right;padding-right:3.6px"><span style="letter-spacing:0.065px;">0.0 kB</span></div>
<div class="c pend" style="left:1648px;width:67px;border-left:1px solid #3c3e46;text-align:right;padding-right:4.5px">待处理</div>
</div>
<div class="row e ok" style="top:891.1px;height:21px">
<svg style="left:5.3px;top:4.4px" width="10.8" height="10.8" viewBox="0 0 10.8 10.8" ><rect x="0.6" y="0.6" width="9.6" height="9.6" rx="1.3" fill="#3a2a20" stroke="#e2a27e" stroke-width="1.2"/><path d="M4.4 3.4L2.8 5.4L4.4 7.4M6.4 3.4L8 5.4L6.4 7.4" stroke="#f0c4a8" stroke-width="1.1" fill="none"/></svg>
<div class="c" style="left:20.8px;width:612px"><span style="letter-spacing:0.387px;">favorite-5d186ff03357a178.js</span></div>
<div class="c pend" style="left:635px;width:210px;border-left:1px solid #3c3e46;padding-left:3.5px"><span class="pl">（</span>待处理<span class="pr">）</span></div>
<div class="c" style="left:846px;width:190px;border-left:1px solid #3c3e46;padding-left:3.8px"><span style="letter-spacing:0.367px;">script</span></div>
<div class="c" style="left:1036px;width:543.5px;border-left:1px solid #3c3e46;padding-left:3.5px"><span class="lnk"><span style="letter-spacing:0.284px;">favorite.html?spm=sc.hm.hd.hd.sc___sc.ols.mtb&amp;lcsc_vid=</span><span style="letter-spacing:0.016px;">QgMPVVdRRQJXUAUAFVQIUwZRFQdbVAFSE1JcAVYCTlAxVlNRRlNdX1ZfR1VWUTsOAxUeFF5JWAwLCgYDBU8dHQgFBAJABAsLWA%3D%3D</span></span></div>
<div class="c" style="left:1579px;width:69px;border-left:1px solid #3c3e46;text-align:right;padding-right:3.6px"><span style="letter-spacing:0.065px;">0.0 kB</span></div>
<div class="c pend" style="left:1648px;width:67px;border-left:1px solid #3c3e46;text-align:right;padding-right:4.5px">待处理</div>
</div>
<div class="a" style="left:1715px;top:697px;width:13px;height:215px;background:#2b2c31"></div>
<svg style="left:1717.3px;top:702.3px" width="8" height="4.4" viewBox="0 0 8 4.4" ><path d="M0 4.4H8L4 0z" fill="#9a9ca2"/></svg>
<div class="a" style="left:1717px;top:713px;width:8.4px;height:34px;border-radius:4.2px;background:#9c9ea4"></div>
<svg style="left:1717.3px;top:898.5px" width="8" height="4.4" viewBox="0 0 8 4.4" ><path d="M0 0H8L4 4.4z" fill="#9a9ca2"/></svg>
<div class="a" id="dtstatus"></div>
<div class="t" style="left:8.75px;top:920px;font-size:10.8px;letter-spacing:0.224px;color:#c7c7c7;">60 个请求</div>
<div class="vd" style="left:66px;top:917px;height:14px"></div>
<div class="t" style="left:75.2px;top:920px;font-size:10.8px;letter-spacing:-0.04px;color:#c7c7c7;">已传输 3.8 kB</div>
<div class="vd" style="left:149px;top:917px;height:14px"></div>
<div class="t" style="left:158.25px;top:920px;font-size:10.8px;letter-spacing:0.164px;color:#c7c7c7;">2.4 MB 项资源</div>
<div class="vd" style="left:237.5px;top:917px;height:14px"></div>
<div class="t" style="left:246px;top:920px;font-size:10.8px;letter-spacing:0.082px;color:#c7c7c7;">完成用时：1.4 分钟</div>
<div class="a" id="taskbar"></div>
<svg style="left:8px;top:938.5px" width="33" height="33" viewBox="0 0 33 33" ><defs><radialGradient id="og" cx="0.5" cy="0.8" r="0.8"><stop offset="0" stop-color="#3cd0f4"/><stop offset="0.4" stop-color="#1a7cc4"/><stop offset="1" stop-color="#0c3468"/></radialGradient><linearGradient id="oh" x1="0" y1="0" x2="0" y2="1"><stop offset="0" stop-color="#fff" stop-opacity="0.75"/><stop offset="1" stop-color="#fff" stop-opacity="0.12"/></linearGradient></defs>
<circle cx="16.3" cy="16.2" r="16" fill="url(#og)" stroke="#9fd0ec" stroke-width="0.8"/>
<path d="M1.6 14.800A14.800 14.800 0 0 1 31 14.800C23 18.600 9.500 18.600 1.600 14.800z" fill="url(#oh)"/>
<g transform="translate(-2.600 -3.200) scale(1.160)">
<path d="M9.600 9.200c2.400-1.400 4.400-1.200 6.600.200l-1.300 5.400c-2.200-1.400-4.200-1.600-6.600-.200z" fill="#f0642c"/>
<path d="M17.400 9.800c2.200 1.200 4.400 1.400 6.800 0l-1.400 5.400c-2.400 1.400-4.400 1.200-6.600 0z" fill="#94cc44"/>
<path d="M8 15.800c2.400-1.400 4.400-1.200 6.600.200l-1.400 5.600c-2.200-1.400-4.200-1.600-6.600-.200z" fill="#58b4f0"/>
<path d="M15.800 16.400c2.200 1.200 4.400 1.400 6.800 0l-1.400 5.600c-2.400 1.400-4.400 1.200-6.600 0z" fill="#f8c430"/></g></svg>
<div class="a" style="left:54px;top:937px;width:52px;height:34px;border:1px solid #ececec;border-radius:2px;background:linear-gradient(135deg,#c4c4c4 0%,#b0b0b0 30%,#9a9a9a 42%,#7e7e7e 43%,#8a8a8a 70%,#949494 100%)"></div>
<svg style="left:65px;top:939px" width="30" height="30" viewBox="0 0 30 30" ><g transform="scale(1.070 1.080)"><path d="M1.500 9.500C5 1.500 17 -0.500 24.500 4.500C29 8 26.500 14.500 21 14C17 13.600 16 8.500 10.500 7.500C6.500 6.800 3.500 8 1.500 9.500z" fill="#12a8f8"/>
<path d="M1.500 9.500C3.500 7.500 7.500 6.500 11 7.700C8 10.500 4 11 1.500 9.500z" fill="#0c5cb4"/>
<path d="M27 18.500C23.500 26.500 11.500 28.500 4 23.500C-0.500 20 2 13.500 7.500 14C11.500 14.400 12.500 19.500 18 20.500C22 21.200 25 20 27 18.500z" fill="#66c814"/>
<path d="M27 18.500C25 20.500 21 21.500 17.500 20.300C20.500 17.500 24.500 17 27 18.500z" fill="#3c8c0c"/></g></svg>
<div class="a" style="left:110px;top:937px;width:52px;height:34px;border:1px solid #8c8c8c;border-radius:2px;background:linear-gradient(135deg,#505050 0%,#3a3a3a 30%,#303030 42%,#1a1a1a 43%,#222 70%,#2a2a2a 100%)"></div>
<svg style="left:123px;top:941px" width="27" height="27" viewBox="0 0 27 27" ><circle cx="13.200" cy="13.200" r="13" fill="#4484ec"/>
<path d="M13.200 13.200L25 6.500A13 13 0 0 1 25 19.900z" fill="#f8bc14"/>
<path d="M13.200 13.200L25.200 6.300M13.200 13.200L25.200 20.100" stroke="#f4f4e0" stroke-width="1"/>
<circle cx="12.600" cy="13.200" r="5.600" fill="#dff0e4"/><circle cx="12.600" cy="13.200" r="4.500" fill="#28a050"/></svg>
<div class="t tk" style="left:1395.5px;top:938.3px;font-size:14px;transform:scale(0.8,1.25);transform-origin:50% 50%">↑</div>
<div class="t tk" style="left:1395.5px;top:954.3px;font-size:14px;transform:scale(0.8,1.25);transform-origin:50% 50%">↓</div>
<div class="t" style="left:1407.5px;top:940.7px;font-size:12.6px;letter-spacing:-0.1px;color:#fff;">0.3 K/s</div>
<div class="t" style="left:1407.5px;top:955.7px;font-size:12.6px;letter-spacing:-0.1px;color:#fff;">0.3 K/s</div>
<div class="a" style="left:1461px;top:939.5px;width:8.5px;height:13.5px;background:#7c7e82"></div>
<div class="t" style="left:1461.5px;top:940.7px;font-size:12.6px;letter-spacing:-0.422px;color:#fff;">CPU: 14 %</div>
<div class="a" style="left:1461px;top:954px;width:27px;height:14.5px;background:#7c7e82"></div>
<div class="t" style="left:1461.5px;top:955.7px;font-size:12.6px;letter-spacing:-0.361px;color:#fff;">内存: 46 %</div>
<svg style="left:1529.5px;top:943px" width="15" height="17" viewBox="0 0 15 17" ><g transform="rotate(-12 7.500 8.500)"><rect x="0.800" y="2" width="13.600" height="13" rx="2" fill="#e2531c"/><rect x="0.800" y="2" width="13.600" height="13" rx="2" fill="none" stroke="#a83410" stroke-width="0.600"/><text x="0" y="0" font-family="Liberation Sans,sans-serif" font-size="11.500" font-weight="bold" font-style="italic" fill="#fff" text-anchor="middle" transform="translate(7.700 12.400) scale(1.350 1)">S</text></g></svg>
<svg style="left:1560px;top:948.5px" width="15" height="15" viewBox="0 0 15 15" ><defs><linearGradient id="gg" x1="0" y1="0" x2="1" y2="1"><stop offset="0" stop-color="#f0e020"/><stop offset="0.450" stop-color="#b8d420"/><stop offset="0.600" stop-color="#2cac2c"/><stop offset="1" stop-color="#188838"/></linearGradient></defs><circle cx="7.400" cy="7.300" r="7" fill="url(#gg)"/><path d="M7.200 3.800V10.200M4 7H10.400" stroke="#1c9420" stroke-width="2"/><circle cx="10.600" cy="10.600" r="1.600" fill="#a8f0c0"/></svg>
<svg style="left:1581.5px;top:946px" width="15" height="17" viewBox="0 0 15 17" ><g transform="rotate(-12 7.500 8.500)"><rect x="0.800" y="2" width="13.600" height="13" rx="2" fill="#e2531c"/><rect x="0.800" y="2" width="13.600" height="13" rx="2" fill="none" stroke="#a83410" stroke-width="0.600"/><text x="0" y="0" font-family="Liberation Sans,sans-serif" font-size="11.500" font-weight="bold" font-style="italic" fill="#fff" text-anchor="middle" transform="translate(7.700 12.400) scale(1.350 1)">S</text></g></svg>
<svg style="left:1604.3px;top:948.5px" width="13.5" height="12.5" viewBox="0 0 13.5 12.5" ><path d="M0.300 3.900H2.600L6.600 0.300V12.200L2.600 8.600H0.300z" fill="#fafafa"/><path d="M8 4.600a2.200 2.200 0 0 1 0 3.400M9.600 2.800a4.600 4.600 0 0 1 0 7M11.200 1.200a7 7 0 0 1 0 10.200" stroke="#e0e0e0" stroke-width="1" fill="none"/></svg>
<svg style="left:1626px;top:948px" width="14" height="14" viewBox="0 0 14 14" ><path d="M1.300 0.400V3M3.700 0.400V3" stroke="#f4f4f4" stroke-width="1"/><path d="M0.300 3H4.700V5.600H0.300z" fill="#f4f4f4"/><path d="M2.500 5.600V13.300H6" stroke="#f4f4f4" stroke-width="1.100" fill="none"/><rect x="4.600" y="2.600" width="8.800" height="7.600" fill="#0a0a0c" stroke="#f4f4f4" stroke-width="1.100"/><path d="M6.500 9.500L12.500 3.500V9.500z" fill="#2a2c30"/><path d="M6.200 12.800H12M9.100 10.200V12.800" stroke="#f4f4f4" stroke-width="1.200"/></svg>
<div class="t tk" style="left:1654px;width:53.500px;text-align:center;top:941px;font-size:11.7px">18:49</div>
<div class="t tk" style="left:1654px;width:53.500px;text-align:center;top:957px;font-size:11.7px">2026/2/16</div>
<div class="a" style="left:1715px;top:938px;width:13px;height:34px;border:1px solid #a8aab0;border-right:none;background:linear-gradient(135deg,#4a4c52 0%,#2a2c30 45%,#0f1114 46%,#16181c 100%)"></div>
</body>
</html>
